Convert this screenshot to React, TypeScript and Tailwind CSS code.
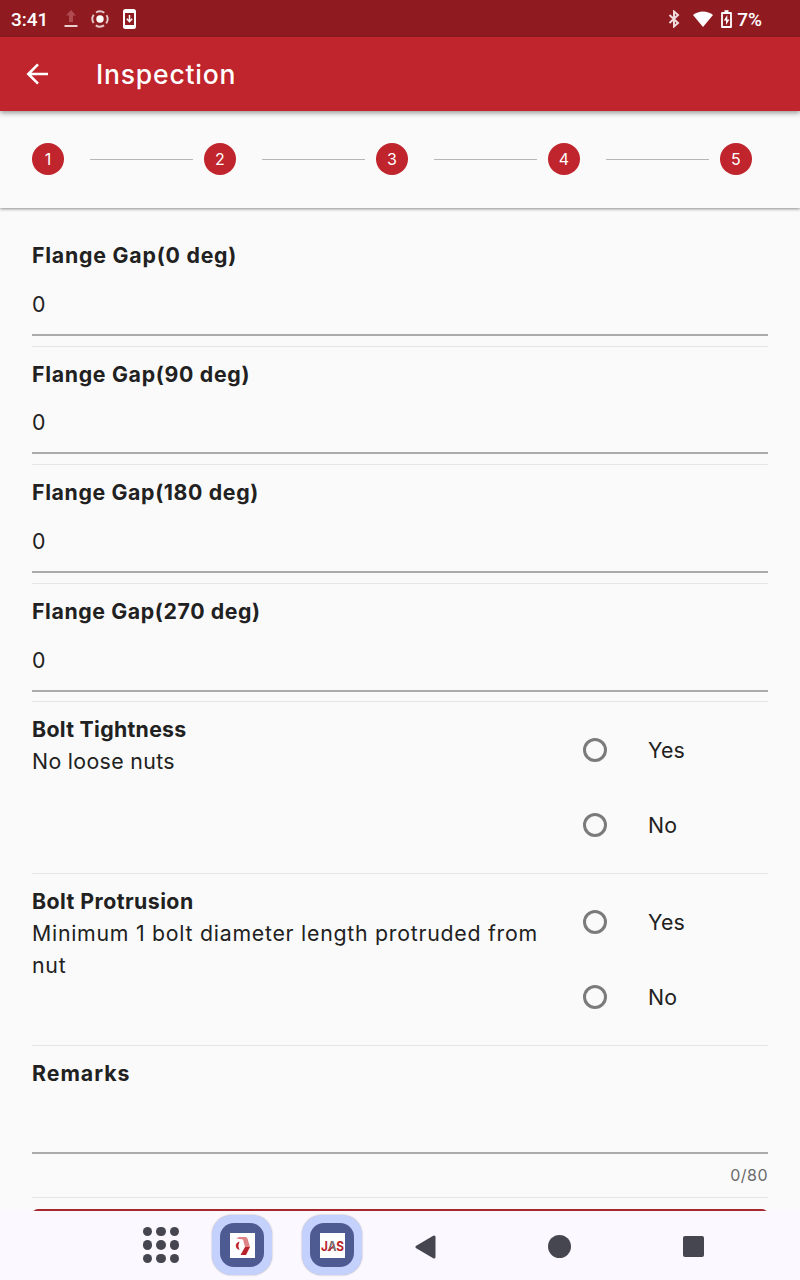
import { useState } from 'react';
import type { ReactNode } from 'react';

const STEPS = [1, 2, 3, 4, 5];

const GAPS = [
  { label: 'Flange Gap(0 deg)', value: '0', tracking: 'tracking-[0.78px]' },
  { label: 'Flange Gap(90 deg)', value: '0', tracking: 'tracking-[0.69px]' },
  { label: 'Flange Gap(180 deg)', value: '0', tracking: 'tracking-[0.63px]' },
  { label: 'Flange Gap(270 deg)', value: '0', tracking: 'tracking-[0.6px]' },
];

const CHECKS = [
  { title: 'Bolt Tightness', detail: 'No loose nuts', titleTracking: 'tracking-[0.3px]', tracking: 'tracking-[0.35px]' },
  {
    title: 'Bolt Protrusion',
    detail: 'Minimum 1 bolt diameter length protruded from nut',
    titleTracking: 'tracking-[0.45px]',
    tracking: 'tracking-[0.74px]',
  },
];

function StatusBar() {
  return (
    <div className="flex h-[37px] items-center bg-[#8f1b21] pr-[38px] pl-[11px] font-['Roboto',sans-serif] text-[19px] font-medium text-white">
      <span className="w-[53px] pt-[2px]">3:41</span>
      <svg width="14" height="20" viewBox="0 0 14 20" className="mr-[13px]">
        <path d="M7 1 2 6.500h3V13h4V6.500h3z" fill="#b04b51" />
        <path d="M.5 17h13" stroke="#fff" strokeWidth="1.6" />
      </svg>
      <svg width="18" height="18" viewBox="0 0 18 18" fill="none" className="mr-[14px]">
        <circle cx="9" cy="9" r="3.7" fill="#fff" />
        <circle
          cx="9"
          cy="9"
          r="7.6"
          stroke="#e6c9cb"
          strokeWidth="1.9"
          strokeDasharray="8.6 3.34"
          strokeDashoffset="-1.7"
          transform="rotate(45 9 9)"
        />
      </svg>
      <svg width="13" height="20" viewBox="0 0 13 20" fill="none">
        <rect x="1" y="1" width="11" height="18" rx="1.5" stroke="#fff" strokeWidth="2" />
        <path d="M1 2.7h11M1 17.3h11" stroke="#fff" strokeWidth="2.4" />
        <path d="M6.5 6v6M3.8 9.8l2.7 2.9 2.7-2.9" stroke="#fff" strokeWidth="1.5" />
      </svg>
      <div className="ml-auto flex items-center">
        <svg width="12" height="18" viewBox="0 0 12 18" fill="none" stroke="#f0dcdd" strokeWidth="2" className="mr-[13px]">
          <path d="m1.500 5 8.500 8-4 3.500v-15l4 3.500-8.500 8" />
        </svg>
        <svg width="20" height="16" viewBox="0 0 20 16" className="mr-[8px]">
          <path d="M10 16 0 4C5.500-.8 14.500-.8 20 4z" fill="#fff" />
        </svg>
        <svg width="11" height="18" viewBox="0 0 11 18" fill="none" className="mr-[5px]">
          <path d="M1 3h9v14H1z" stroke="#fff" strokeWidth="1.8" strokeLinejoin="round" />
          <path d="M3.500 1.200h4" stroke="#fff" strokeWidth="2" />
          <path d="M6.300 5 2.800 10.500h2.200V15l3.500-5.500H6.300z" fill="#fff" />
        </svg>
        <span className="pt-[2px]">7%</span>
      </div>
    </div>
  );
}

function AppBar() {
  return (
    <header className="relative z-20 flex h-[74px] items-center bg-[#c0242c] pl-[26px] shadow-[0_2px_5px_rgba(0,0,0,0.4)]">
      <button aria-label="Back" className="mr-[48px]">
        <svg width="22" height="22" viewBox="0 0 22 22" fill="none" stroke="#fff" strokeWidth="2.6">
          <path d="M22 11H2.500M12 1.300 2.300 11l9.700 9.700" />
        </svg>
      </button>
      <h1 className="text-[26.5px] font-medium tracking-[0.8px] text-white">Inspection</h1>
    </header>
  );
}

function Stepper() {
  return (
    <div className="relative z-10 flex h-[97px] items-center bg-[#fafafa] px-8 pb-px shadow-[0_1px_3px_rgba(0,0,0,0.45)]">
      {STEPS.map((n) => (
        <div key={n} className="flex items-center">
          {n > 1 && <div className="mr-[10.600px] ml-[26.400px] h-px w-[103px] bg-[#b5b7b5]" />}
          <div className="flex size-8 items-center justify-center rounded-full bg-[#c0242c] text-base text-white">{n}</div>
        </div>
      ))}
    </div>
  );
}

function Section({ height, children }: { height: string; children: ReactNode }) {
  return <section className={`${height} border-b border-[#e6e6e6] pt-[11px]`}>{children}</section>;
}

function Radio({ label, name }: { label: string; name: string }) {
  return (
    <label className="flex h-[75px] items-center">
      <input
        type="radio"
        name={name}
        className="size-6 appearance-none rounded-full border-3 border-[#7b7b7b] checked:border-[7px] checked:border-[#c0242c]"
      />
      <span className="ml-[41px] tracking-[0.1px]">{label}</span>
    </label>
  );
}

function NavBar() {
  return (
    <nav className="flex h-[69px] shrink-0 items-center bg-[#fbf8ff] pb-px pl-[143px]">
      <div className="grid grid-cols-3 gap-[4px]">
        {Array.from({ length: 9 }, (_, i) => (
          <i key={i} className="size-[9.300px] rounded-full bg-[#464650]" />
        ))}
      </div>
      <div className="ml-[33.500px] flex gap-[30px]">
        <AppIcon>
          <path d="M6 5.500 9 4h7l1.500 1.500L20 14h-5l-2-7.500z" fill="#df8286" />
          <path d="M15 14h5l-4 8h-5.500z" fill="#b9242c" />
          <path d="M9.500 8.500C4.500 10 4.500 15.500 9.500 17l-1.200-4z" fill="#c0242c" />
        </AppIcon>
        <AppIcon>
          <text x="1" y="17.500" textLength="23" lengthAdjust="spacingAndGlyphs" fontSize="13" fontWeight="700" fill="#b9242c">
            J<tspan fill="#77706f">A</tspan>S
          </text>
          <path d="m7 18 8.500-7.500L10 18z" fill="#b9242c" />
        </AppIcon>
      </div>
      <svg width="22" height="24" viewBox="0 0 22 24" className="mt-[3px] ml-[52.500px]">
        <path d="M19 2v20L2 12z" fill="#464650" stroke="#464650" strokeWidth="3" strokeLinejoin="round" />
      </svg>
      <i className="mt-[3px] ml-[111px] size-[23px] rounded-full bg-[#464650]" />
      <i className="mt-[3px] ml-[112px] size-[21px] rounded-[2px] bg-[#464650]" />
    </nav>
  );
}

function AppIcon({ children }: { children: ReactNode }) {
  return (
    <div className="flex size-[60px] items-center justify-center rounded-[20px] bg-[#c4d1fd] shadow-[0_0_2px_rgba(0,0,0,0.35)]">
      <div className="flex size-11 items-center justify-center rounded-[14px] bg-[#4e5b93]">
        <svg width="25" height="25" viewBox="0 0 25 25" className="bg-white">
          {children}
        </svg>
      </div>
    </div>
  );
}

export default function App() {
  const [values, setValues] = useState(GAPS.map((g) => g.value));
  const [remarks, setRemarks] = useState('');

  return (
    <div className="flex h-[1280px] w-[800px] flex-col overflow-hidden bg-[#fafafa] font-['Inter','Noto_Sans',sans-serif] text-[21.300px] leading-8 text-[#212121]">
      <StatusBar />
      <AppBar />
      <Stepper />
      <main className="min-h-0 flex-1 overflow-hidden px-8 pt-5">
        {GAPS.map((g, i) => (
          <Section key={g.label} height="h-[118.600px]">
            <h2 className={`font-bold ${g.tracking}`}>{g.label}</h2>
            <input
              aria-label={g.label}
              value={values[i]}
              onChange={(e) => setValues(values.map((v, j) => (j === i ? e.target.value : v)))}
              className="block h-[64.800px] w-full border-b-2 border-[#ababab] pt-[3px] outline-none"
            />
          </Section>
        ))}
        {CHECKS.map((c) => (
          <Section key={c.title} height="h-[171.800px]">
            <div className="flex">
              <div className="w-[551px] pr-10">
                <h2 className={`font-bold ${c.titleTracking}`}>{c.title}</h2>
                <p className={c.tracking}>{c.detail}</p>
              </div>
              <div className="-mt-px">
                <Radio name={c.title} label="Yes" />
                <Radio name={c.title} label="No" />
              </div>
            </div>
          </Section>
        ))}
        <Section height="h-[152.500px]">
          <h2 className="font-bold tracking-[1px]">Remarks</h2>
          <input
            aria-label="Remarks"
            value={remarks}
            maxLength={80}
            onChange={(e) => setRemarks(e.target.value)}
            className="block h-[64.800px] w-full border-b-2 border-[#ababab] outline-none"
          />
          <p className="pt-[9px] text-right text-base/6 tracking-[0.5px] text-[#6b6b6b]">{remarks.length}/80</p>
        </Section>
        <button className="mt-[11px] block h-12 w-full rounded-md bg-[#a8262d]" aria-label="Submit" />
      </main>
      <NavBar />
    </div>
  );
}
